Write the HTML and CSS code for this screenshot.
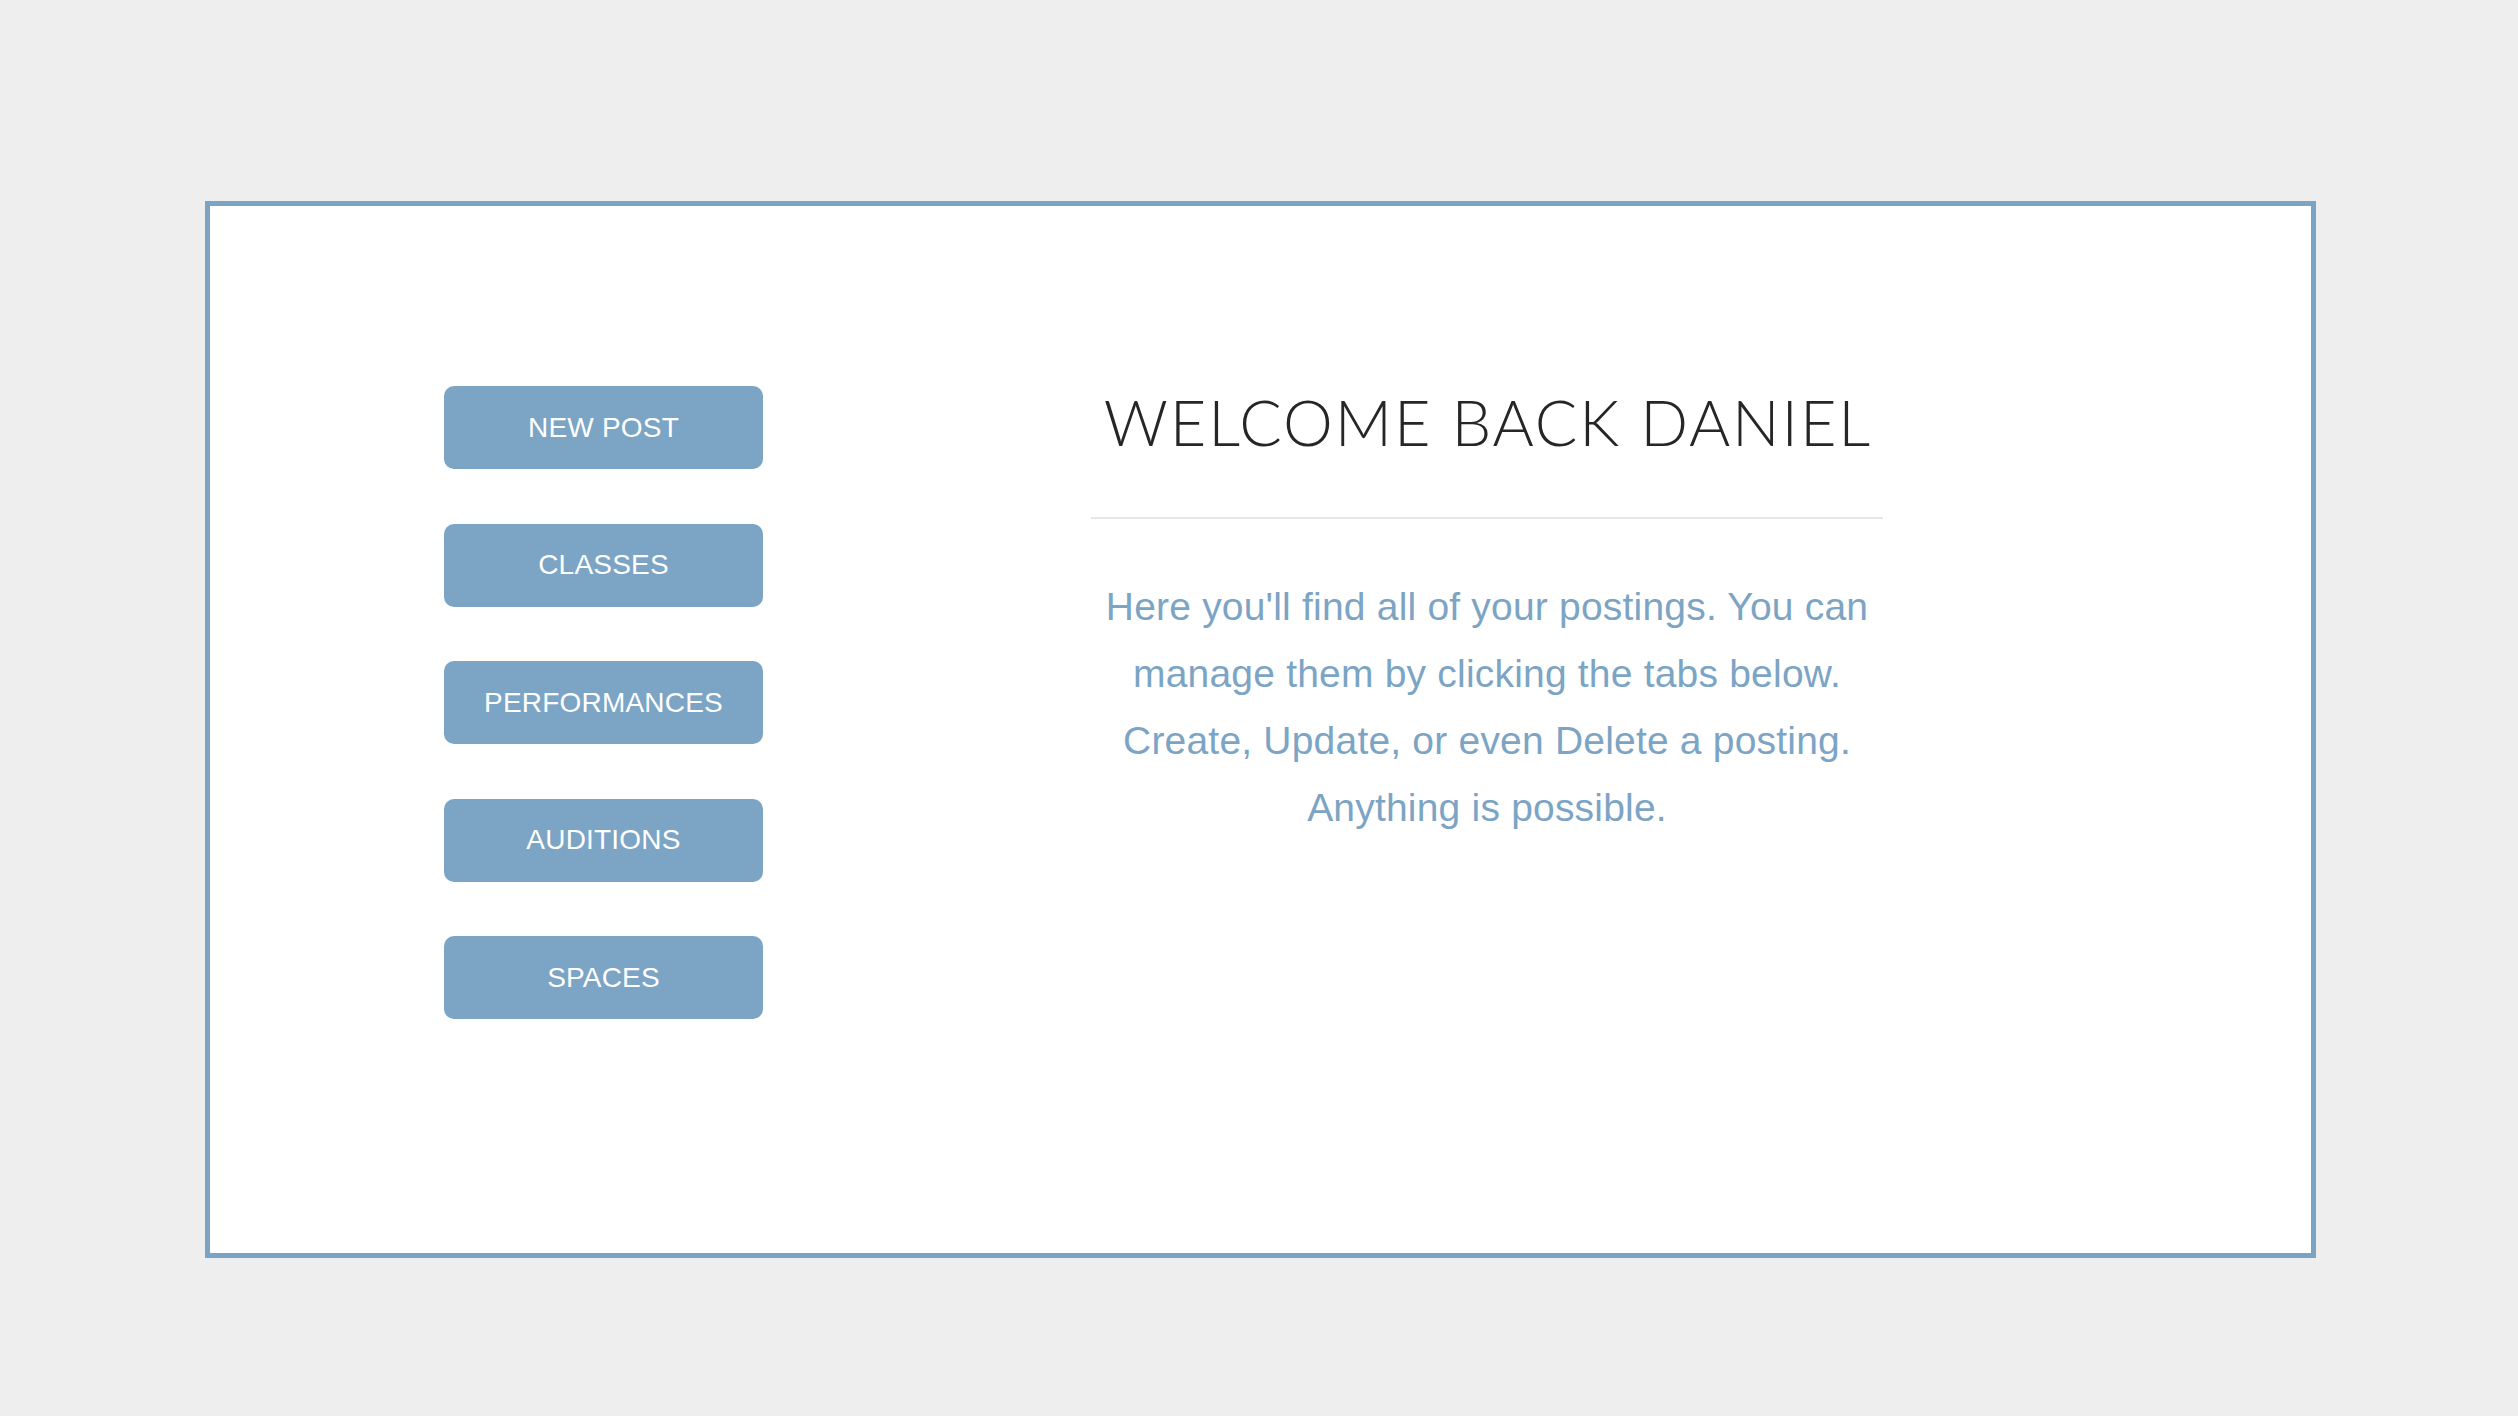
FILE: index.html
```html
<!DOCTYPE html>
<html lang="en">
<head>
<meta charset="utf-8">
<title>Dashboard</title>
<link rel="stylesheet" href="styles.css">
</head>
<body>
<div class="card">
  <nav class="sidebar">
    <a class="btn" href="#">NEW POST</a>
    <a class="btn" href="#">CLASSES</a>
    <a class="btn" href="#">PERFORMANCES</a>
    <a class="btn" href="#">AUDITIONS</a>
    <a class="btn" href="#">SPACES</a>
  </nav>
  <main class="main">
    <h1 class="title">WELCOME BACK DANIEL</h1>
    <hr class="rule">
    <p class="intro">Here you'll find all of your postings. You can<br>manage them by clicking the tabs below.<br>Create, Update, or even Delete a posting.<br>Anything is possible.</p>
  </main>
</div>
</body>
</html>
```
FILE: styles.css
```css
html, body {
  margin: 0;
  padding: 0;
}
body {
  background: #eeeeee;
  font-family: "Liberation Sans", Arial, sans-serif;
  min-height: 1416px;
  overflow: hidden;
}
.card {
  box-sizing: border-box;
  width: 2111px;
  height: 1057px;
  margin: 201px 0 0 205px;
  border: 5px solid #7ba3c3;
  background: #ffffff;
  display: flex;
  align-items: flex-start;
  padding: 178px 0 0 234px;
}
.sidebar {
  display: flex;
  flex-direction: column;
  gap: 54.5px;
  width: 319px;
  margin-top: 2px;
  flex: none;
}
.btn {
  display: flex;
  align-items: center;
  justify-content: center;
  height: 83px;
  border-radius: 10px;
  background: #7ba4c5;
  color: #ffffff;
  text-decoration: none;
  font-size: 28px;
  letter-spacing: 0.2px;
}
.main {
  width: 792px;
  margin-left: 328px;
  text-align: center;
  flex: none;
}
.title {
  margin: 0;
  padding-left: 2px;
  font-family: "Lato", sans-serif;
  font-weight: 300;
  font-size: 63px;
  line-height: 1.2;
  letter-spacing: 1.9px;
  color: #262626;
}
.rule {
  border: 0;
  height: 2px;
  background: #e6e6e6;
  margin: 57px 0 54px;
}
.intro {
  margin: 0;
  font-size: 39px;
  line-height: 67px;
  letter-spacing: 0.2px;
  color: #7ca4c4;
}
```
